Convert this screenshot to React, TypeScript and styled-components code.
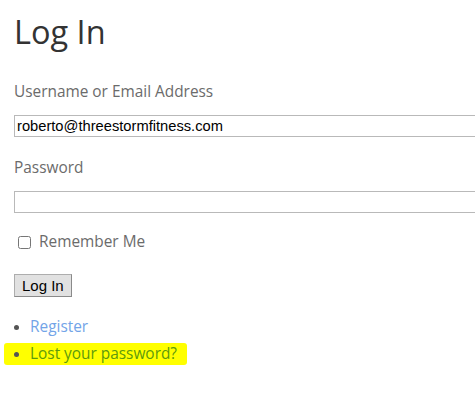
import styled, { createGlobalStyle } from 'styled-components';

const GlobalStyle = createGlobalStyle`
	body {
		margin: 0;
		background: #fff;
		font-family: 'Open Sans', 'Noto Sans', sans-serif;
	}
`;

const StyledPage = styled.div`
	padding: 0 0 0 14px;
	width: 500px;
	overflow: hidden;
`;

const StyledTitle = styled.h1`
	font-size: 32.5px;
	font-weight: 400;
	color: #333;
	margin: 10px 0 27px;
	line-height: 44px;
`;

const StyledField = styled.div`
	display: flex;
	flex-direction: column;
	margin-bottom: 20px;
`;

const StyledLabel = styled.label`
	font-size: 15.4px;
	color: #6b6b6b;
	line-height: 22px;
	margin-bottom: 12px;
`;

const StyledInput = styled.input`
	box-sizing: border-box;
	width: 480px;
	height: 22px;
	border: 1px solid #b9b9b9;
	padding: 0 2px;
	font-family: 'Liberation Sans', Arial, sans-serif;
	font-size: 14.7px;
	color: #000;
	outline: none;
`;

const StyledCheckRow = styled.label`
	display: flex;
	align-items: center;
	gap: 8px;
	padding-left: 4px;
	font-size: 15.4px;
	color: #6b6b6b;
	margin: -2px 0 21px;
	line-height: 22px;

	input {
		margin: 0;
		width: 13px;
		height: 13px;
	}
`;

const StyledButton = styled.button`
	display: block;
	font-family: 'Liberation Sans', Arial, sans-serif;
	font-size: 15px;
	color: #000;
	background: #e1e1e1;
	border: 1px solid #adadad;
	border-right-color: #8a8a8a;
	border-bottom-color: #8a8a8a;
	height: 23px;
	padding: 0 7px;
	margin: 0 0 19px;
`;

const StyledList = styled.ul`
	list-style: none;
	margin: 0;
	padding: 0;
	display: flex;
	flex-direction: column;
	gap: 5px;
`;

const StyledItem = styled.li<{ $highlight?: boolean }>`
	display: flex;
	align-items: center;
	width: fit-content;
	font-size: 15.4px;
	line-height: 22px;
	margin-left: ${({ $highlight }) => ($highlight ? '-10px' : '0')};
	padding: ${({ $highlight }) => ($highlight ? '0 10px 0 10px' : '0')};
	background: ${({ $highlight }) => ($highlight ? '#ffff00' : 'transparent')};
	border-radius: 3px;

	&::before {
		content: '';
		width: 5px;
		height: 5px;
		border-radius: 50%;
		background: #555;
		margin-right: 11px;
	}

	a {
		text-decoration: none;
		color: ${({ $highlight }) => ($highlight ? '#5d9a0e' : '#72a4e8')};
	}
`;

const App = () => {
	return (
		<>
			<GlobalStyle />
			<StyledPage>
				<StyledTitle>Log In</StyledTitle>
				<form onSubmit={(e) => e.preventDefault()}>
					<StyledField>
						<StyledLabel htmlFor='user_login'>Username or Email Address</StyledLabel>
						<StyledInput id='user_login' type='text' defaultValue='roberto@threestormfitness.com' />
					</StyledField>
					<StyledField>
						<StyledLabel htmlFor='user_pass'>Password</StyledLabel>
						<StyledInput id='user_pass' type='password' />
					</StyledField>
					<StyledCheckRow>
						<input type='checkbox' />
						Remember Me
					</StyledCheckRow>
					<StyledButton type='submit'>Log In</StyledButton>
				</form>
				<StyledList>
					<StyledItem>
						<a href='#'>Register</a>
					</StyledItem>
					<StyledItem $highlight>
						<a href='#'>Lost your password?</a>
					</StyledItem>
				</StyledList>
			</StyledPage>
		</>
	);
};

export default App;
